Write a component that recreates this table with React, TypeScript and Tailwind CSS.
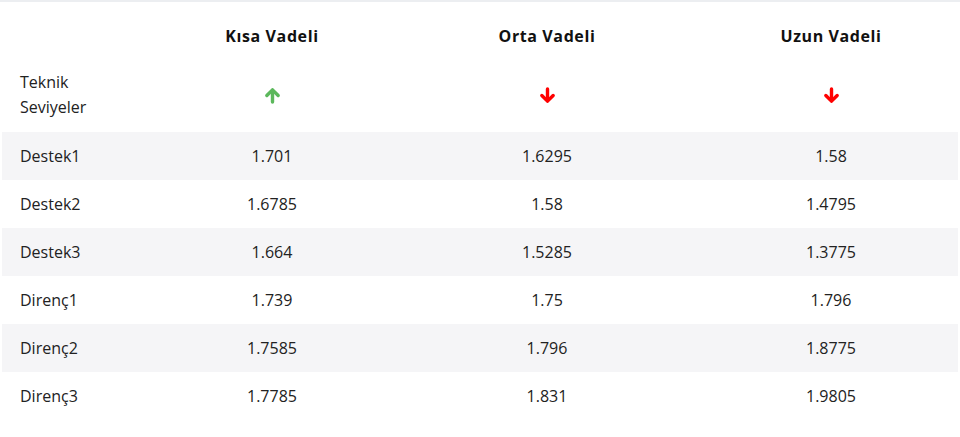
const rows = [
  { label: "Destek1", values: ["1.701", "1.6295", "1.58"] },
  { label: "Destek2", values: ["1.6785", "1.58", "1.4795"] },
  { label: "Destek3", values: ["1.664", "1.5285", "1.3775"] },
  { label: "Direnç1", values: ["1.739", "1.75", "1.796"] },
  { label: "Direnç2", values: ["1.7585", "1.796", "1.8775"] },
  { label: "Direnç3", values: ["1.7785", "1.831", "1.9805"] },
];

const cols = "grid grid-cols-[148px_244px_306px_262px]";

function Arrow({ up }: { up: boolean }) {
  return (
    <svg
      width="17"
      height="17"
      viewBox="0 0 18 18"
      fill="none"
      stroke={up ? "#5cb85c" : "#ff0000"}
      strokeWidth="3.6"
      strokeLinecap="round"
      strokeLinejoin="round"
      className={up ? "" : "rotate-180"}
    >
      <polyline points="3,9 9,3 15,9" />
      <line x1="9" y1="3.5" x2="9" y2="16" />
    </svg>
  );
}

export default function App() {
  return (
    <div className="w-[960px] h-[437px] bg-white font-['Open_Sans',sans-serif] text-[16px] text-[#222]">
      <div className="h-[2px] bg-[#eceef1]" />
      <div className="px-[2px]">
        {/* Header */}
        <div className={`${cols} h-[68px] items-center font-bold tracking-[0.6px] text-[#111]`}>
          <div />
          <div className="text-center">Kısa Vadeli</div>
          <div className="text-center">Orta Vadeli</div>
          <div className="text-center">Uzun Vadeli</div>
        </div>
        <div className={`${cols} h-[62px] pb-[12px] items-center`}>
          <div className="pl-[18px] leading-[25px]">
            Teknik
            <br />
            Seviyeler
          </div>
          <div className="flex justify-center">
            <Arrow up />
          </div>
          <div className="flex justify-center">
            <Arrow up={false} />
          </div>
          <div className="flex justify-center">
            <Arrow up={false} />
          </div>
        </div>
        {rows.map((row, i) => (
          <div
            key={row.label}
            className={`${cols} h-[48px] items-center ${
              i % 2 === 0 ? "bg-[#f5f5f7]" : "bg-white"
            }`}
          >
            <div className="pl-[18px]">{row.label}</div>
            {row.values.map((v, j) => (
              <div key={j} className="text-center">
                {v}
              </div>
            ))}
          </div>
        ))}
      </div>
    </div>
  );
}
